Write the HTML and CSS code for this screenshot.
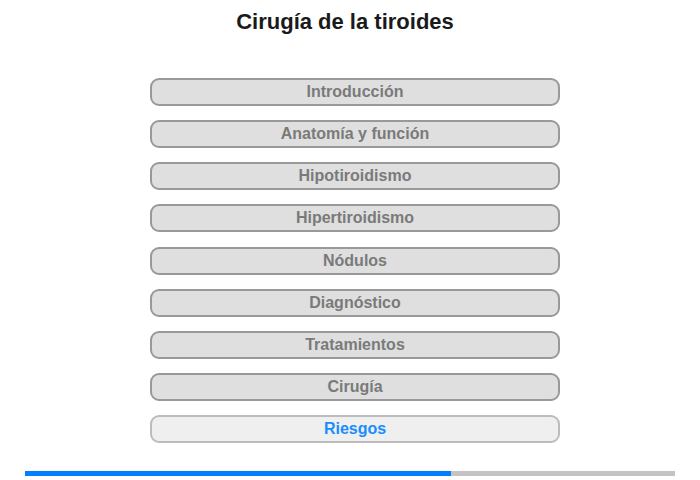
FILE: index.html
```html
<!DOCTYPE html>
<html lang="es">
<head>
  <meta charset="UTF-8" />
  <meta name="viewport" content="width=device-width, initial-scale=1.0">
  <title>Cirugía de la tiroides</title>
  <link rel="stylesheet" href="styles.css">
</head>
<body>

  <h1 class="pageTitle">Cirugía de la tiroides</h1>

  <!-- Menú de capítulos -->
  <div class="chapterList">
    <div class="chapter">Introducción</div>
    <div class="chapter">Anatomía y función</div>
    <div class="chapter">Hipotiroidismo</div>
    <div class="chapter">Hipertiroidismo</div>
    <div class="chapter">Nódulos</div>
    <div class="chapter">Diagnóstico</div>
    <div class="chapter">Tratamientos</div>
    <div class="chapter">Cirugía</div>
    <div class="chapter current">Riesgos</div>
  </div>

  <div class="progressBar">
    <div class="progressFill"></div>
  </div>

</body>
</html>
```

FILE: styles.css
```css
* { margin: 0; padding: 0; box-sizing: border-box; }
html, body {
  font-family: 'Liberation Sans', Arial, sans-serif;
  background: #fff;
  width: 700px;
  height: 480px;
  overflow: hidden;
}

.pageTitle {
  margin-top: 9px;
  padding-right: 10px;
  font-size: 22px;
  line-height: 26px;
  font-weight: bold;
  color: #1a1a1a;
  text-align: center;
}

.chapterList {
  width: 410px;
  margin: 43px 0 0 150px;
  display: flex;
  flex-direction: column;
  gap: 14.15px;
}

.chapter {
  height: 28px;
  border: 2px solid #999;
  border-radius: 9px;
  background: #dfdfdf;
  color: #7a7a7a;
  font-size: 16px;
  font-weight: bold;
  line-height: 24px;
  text-align: center;
}

.chapter.current {
  background: #efefef;
  border-color: #bcbcbc;
  color: #1a8cff;
}

.progressBar {
  width: 650px;
  height: 5px;
  margin: 28px auto 0;
  background: #c4c4c4;
}

.progressFill {
  width: 426px;
  height: 100%;
  background: #0080ff;
}
```
